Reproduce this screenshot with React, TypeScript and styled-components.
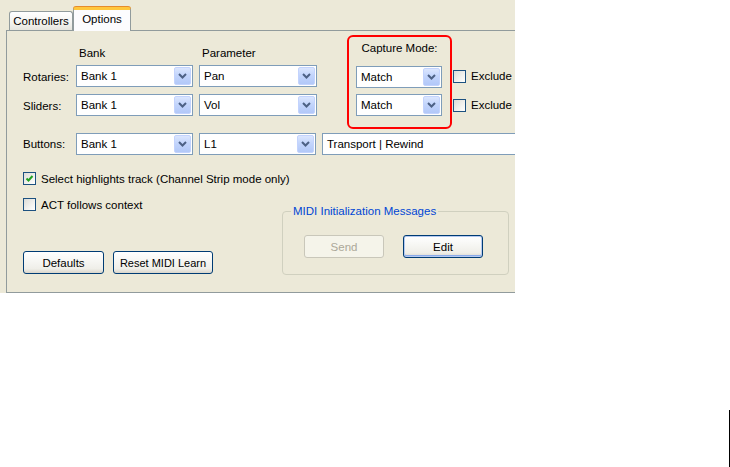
import React from 'react';
import styled, { createGlobalStyle } from 'styled-components';

const GlobalStyle = createGlobalStyle`
  html, body {
    margin: 0;
    padding: 0;
    background: #ffffff;
  }
  body {
    font-family: "Liberation Sans", Arial, sans-serif;
    font-size: 11.5px;
    color: #000;
  }
  * {
    box-sizing: border-box;
  }
`;

const Window = styled.div`
  width: 515px;
  height: 293px;
  overflow: hidden;
  background: #ece9d8;
  padding-top: 7px;
  display: flex;
  flex-direction: column;
`;

const TabStrip = styled.div`
  display: flex;
  align-items: flex-end;
  height: 23px;
  padding-left: 9px;
  position: relative;
  z-index: 1;
`;

const Tab = styled.div<{ $active?: boolean }>`
  height: ${(p) => (p.$active ? 24 : 19)}px;
  width: ${(p) => (p.$active ? 58 : 64)}px;
  margin-bottom: ${(p) => (p.$active ? -1 : 0)}px;
  border: 1px solid #919b9c;
  border-bottom: none;
  border-top: ${(p) => (p.$active ? '3px solid #ffc73c' : '1px solid #919b9c')};
  box-shadow: ${(p) => (p.$active ? '0 -1px 0 #e68b2c' : 'none')};
  border-radius: 3px 3px 0 0;
  background: ${(p) =>
    p.$active ? '#fcfcfe' : 'linear-gradient(180deg, #ffffff 0%, #f3f3ef 60%, #e6e5de 100%)'};
  display: flex;
  align-items: center;
  justify-content: center;
  padding-bottom: ${(p) => (p.$active ? 3 : 0)}px;
  white-space: nowrap;
`;

const Panel = styled.div`
  flex: 1;
  width: 560px;
  margin-left: 6px;
  border: 1px solid #919b9c;
  border-right: none;
  padding: 4px 0 0 16px;
  display: flex;
  flex-direction: column;
`;

const TopSection = styled.div`
  display: flex;
  align-items: flex-start;
`;

const FieldGrid = styled.div`
  display: grid;
  grid-template-columns: 53px 123px 118px;
  grid-template-rows: 30px 29px 22px;
  align-items: start;
`;

const ColumnHead = styled.div`
  align-self: end;
  line-height: 13px;
  padding-bottom: 5px;
  padding-left: 3px;
`;

const RowLabel = styled.div<{ $width?: number }>`
  line-height: 22px;
  padding-top: 1px;
  white-space: nowrap;
  width: ${(p) => (p.$width ? `${p.$width}px` : 'auto')};
  flex-shrink: 0;
`;

const ComboBox = styled.div<{ $width: number }>`
  width: ${(p) => p.$width}px;
  height: 22px;
  border: 1px solid #7f9db9;
  background: #ffffff;
  padding: 1px;
  display: flex;
  align-items: center;
  flex-shrink: 0;
`;

const ComboText = styled.span`
  flex: 1;
  padding-left: 3px;
  white-space: nowrap;
  overflow: hidden;
`;

const DropButton = styled.span`
  width: 17px;
  height: 18px;
  border: 1px solid #c3d3fd;
  border-radius: 2px;
  background: linear-gradient(180deg, #dbe6fe 0%, #c3d5fc 45%, #b2c8f8 100%);
  display: flex;
  align-items: center;
  justify-content: center;
`;

const CaptureBox = styled.div`
  width: 105px;
  margin-left: 30px;
  border: 2px solid #ff0000;
  border-radius: 6px;
  padding: 5px 0 11px 7px;
  display: flex;
  flex-direction: column;
  gap: 6px;
`;

const CaptureTitle = styled.div`
  line-height: 13px;
  text-align: center;
  padding-right: 7px;
  margin-bottom: 5px;
  white-space: nowrap;
`;

const ExcludeColumn = styled.div`
  margin-left: 1px;
  padding-top: 30px;
  display: flex;
  flex-direction: column;
  gap: 7px;
`;

const CheckRow = styled.label<{ $height?: number }>`
  display: flex;
  align-items: center;
  gap: 5px;
  height: ${(p) => p.$height ?? 13}px;
  white-space: nowrap;
`;

const CheckBox = styled.span`
  width: 13px;
  height: 13px;
  flex-shrink: 0;
  border: 1px solid #1c5180;
  background: linear-gradient(135deg, #dcdcd7 0%, #f2f2ef 60%, #ffffff 100%);
  display: flex;
  align-items: center;
  justify-content: center;
`;

const ButtonsRow = styled.div`
  display: flex;
  align-items: center;
  gap: 6px;
  margin-top: 3px;
`;

const TextBox = styled.div`
  width: 240px;
  height: 22px;
  border: 1px solid #7f9db9;
  background: #ffffff;
  line-height: 20px;
  padding-left: 4px;
  white-space: nowrap;
  flex-shrink: 0;
`;

const OptionRow = styled.div<{ $top: number }>`
  margin-top: ${(p) => p.$top}px;
`;

const BottomSection = styled.div`
  display: flex;
  align-items: flex-start;
  margin-top: 13px;
`;

const LeftColumn = styled.div`
  width: 259px;
  display: flex;
  flex-direction: column;
`;

const PushRow = styled.div`
  display: flex;
  gap: 9px;
  margin-top: 40px;
`;

const PushButton = styled.button<{ $width: number; $default?: boolean; $tight?: boolean }>`
  width: ${(p) => p.$width}px;
  height: 23px;
  padding: 0;
  font: inherit;
  font-size: ${(p) => (p.$tight ? '11px' : 'inherit')};
  color: ${(p) => (p.disabled ? '#aca899' : '#000')};
  border: 1px solid ${(p) => (p.disabled ? '#c9c7ba' : '#003c74')};
  border-radius: 3px;
  background: ${(p) =>
    p.disabled
      ? '#f5f4ea'
      : 'linear-gradient(180deg, #ffffff 0%, #f7f7f4 40%, #efeee8 80%, #d9d5cb 100%)'};
  box-shadow: ${(p) =>
    p.$default ? 'inset 0 0 0 1px #b5c9f0, inset 0 -1px 0 1px #8aaaea' : 'none'};
  white-space: nowrap;
`;

const GroupBox = styled.fieldset`
  width: 227px;
  margin: 7px 0 0 0;
  border: 1px solid #d0d0bf;
  border-radius: 4px;
  padding: 17px 0 16px 21px;
  display: flex;
  gap: 19px;
`;

const GroupLegend = styled.legend`
  color: #0046d5;
  line-height: 13px;
  margin-left: -13px;
  padding: 0 2px;
`;

const EdgeMark = styled.div`
  position: fixed;
  left: 729px;
  top: 410px;
  width: 1px;
  height: 57px;
  background: #000;
`;

const Chevron = () => (
  <svg width="9" height="6" viewBox="0 0 9 6">
    <path d="M1 1 L4.5 4.5 L8 1" fill="none" stroke="#4d6185" strokeWidth="2" />
  </svg>
);

const Tick = () => (
  <svg width="9" height="9" viewBox="0 0 9 9">
    <polyline points="1.5,4.5 3.5,6.5 7.5,2" fill="none" stroke="#21a121" strokeWidth="2" />
  </svg>
);

const Combo: React.FC<{ value: string; width: number }> = ({ value, width }) => (
  <ComboBox $width={width}>
    <ComboText>{value}</ComboText>
    <DropButton>
      <Chevron />
    </DropButton>
  </ComboBox>
);

const Check: React.FC<{ label: string; checked?: boolean; height?: number }> = ({
  label,
  checked,
  height,
}) => (
  <CheckRow $height={height}>
    <CheckBox>{checked && <Tick />}</CheckBox>
    <span>{label}</span>
  </CheckRow>
);

export default function App() {
  return (
    <>
      <GlobalStyle />
      <Window>
        <TabStrip>
          <Tab>Controllers</Tab>
          <Tab $active>Options</Tab>
        </TabStrip>
        <Panel>
          <TopSection>
            <FieldGrid>
              <div />
              <ColumnHead>Bank</ColumnHead>
              <ColumnHead>Parameter</ColumnHead>
              <RowLabel>Rotaries:</RowLabel>
              <Combo value="Bank 1" width={117} />
              <Combo value="Pan" width={118} />
              <RowLabel>Sliders:</RowLabel>
              <Combo value="Bank 1" width={117} />
              <Combo value="Vol" width={118} />
            </FieldGrid>
            <CaptureBox>
              <CaptureTitle>Capture Mode:</CaptureTitle>
              <Combo value="Match" width={86} />
              <Combo value="Match" width={86} />
            </CaptureBox>
            <ExcludeColumn>
              <Check label="Exclude" height={22} />
              <Check label="Exclude" height={22} />
            </ExcludeColumn>
          </TopSection>

          <ButtonsRow>
            <RowLabel $width={47}>Buttons:</RowLabel>
            <Combo value="Bank 1" width={117} />
            <Combo value="L1" width={117} />
            <TextBox>Transport | Rewind</TextBox>
          </ButtonsRow>

          <OptionRow $top={17}>
            <Check label="Select highlights track (Channel Strip mode only)" checked />
          </OptionRow>

          <BottomSection>
            <LeftColumn>
              <Check label="ACT follows context" />
              <PushRow>
                <PushButton $width={81}>Defaults</PushButton>
                <PushButton $width={100} $tight>
                  Reset MIDI Learn
                </PushButton>
              </PushRow>
            </LeftColumn>
            <GroupBox>
              <GroupLegend>MIDI Initialization Messages</GroupLegend>
              <PushButton $width={80} disabled>
                Send
              </PushButton>
              <PushButton $width={80} $default>
                Edit
              </PushButton>
            </GroupBox>
          </BottomSection>
        </Panel>
      </Window>
      <EdgeMark />
    </>
  );
}
